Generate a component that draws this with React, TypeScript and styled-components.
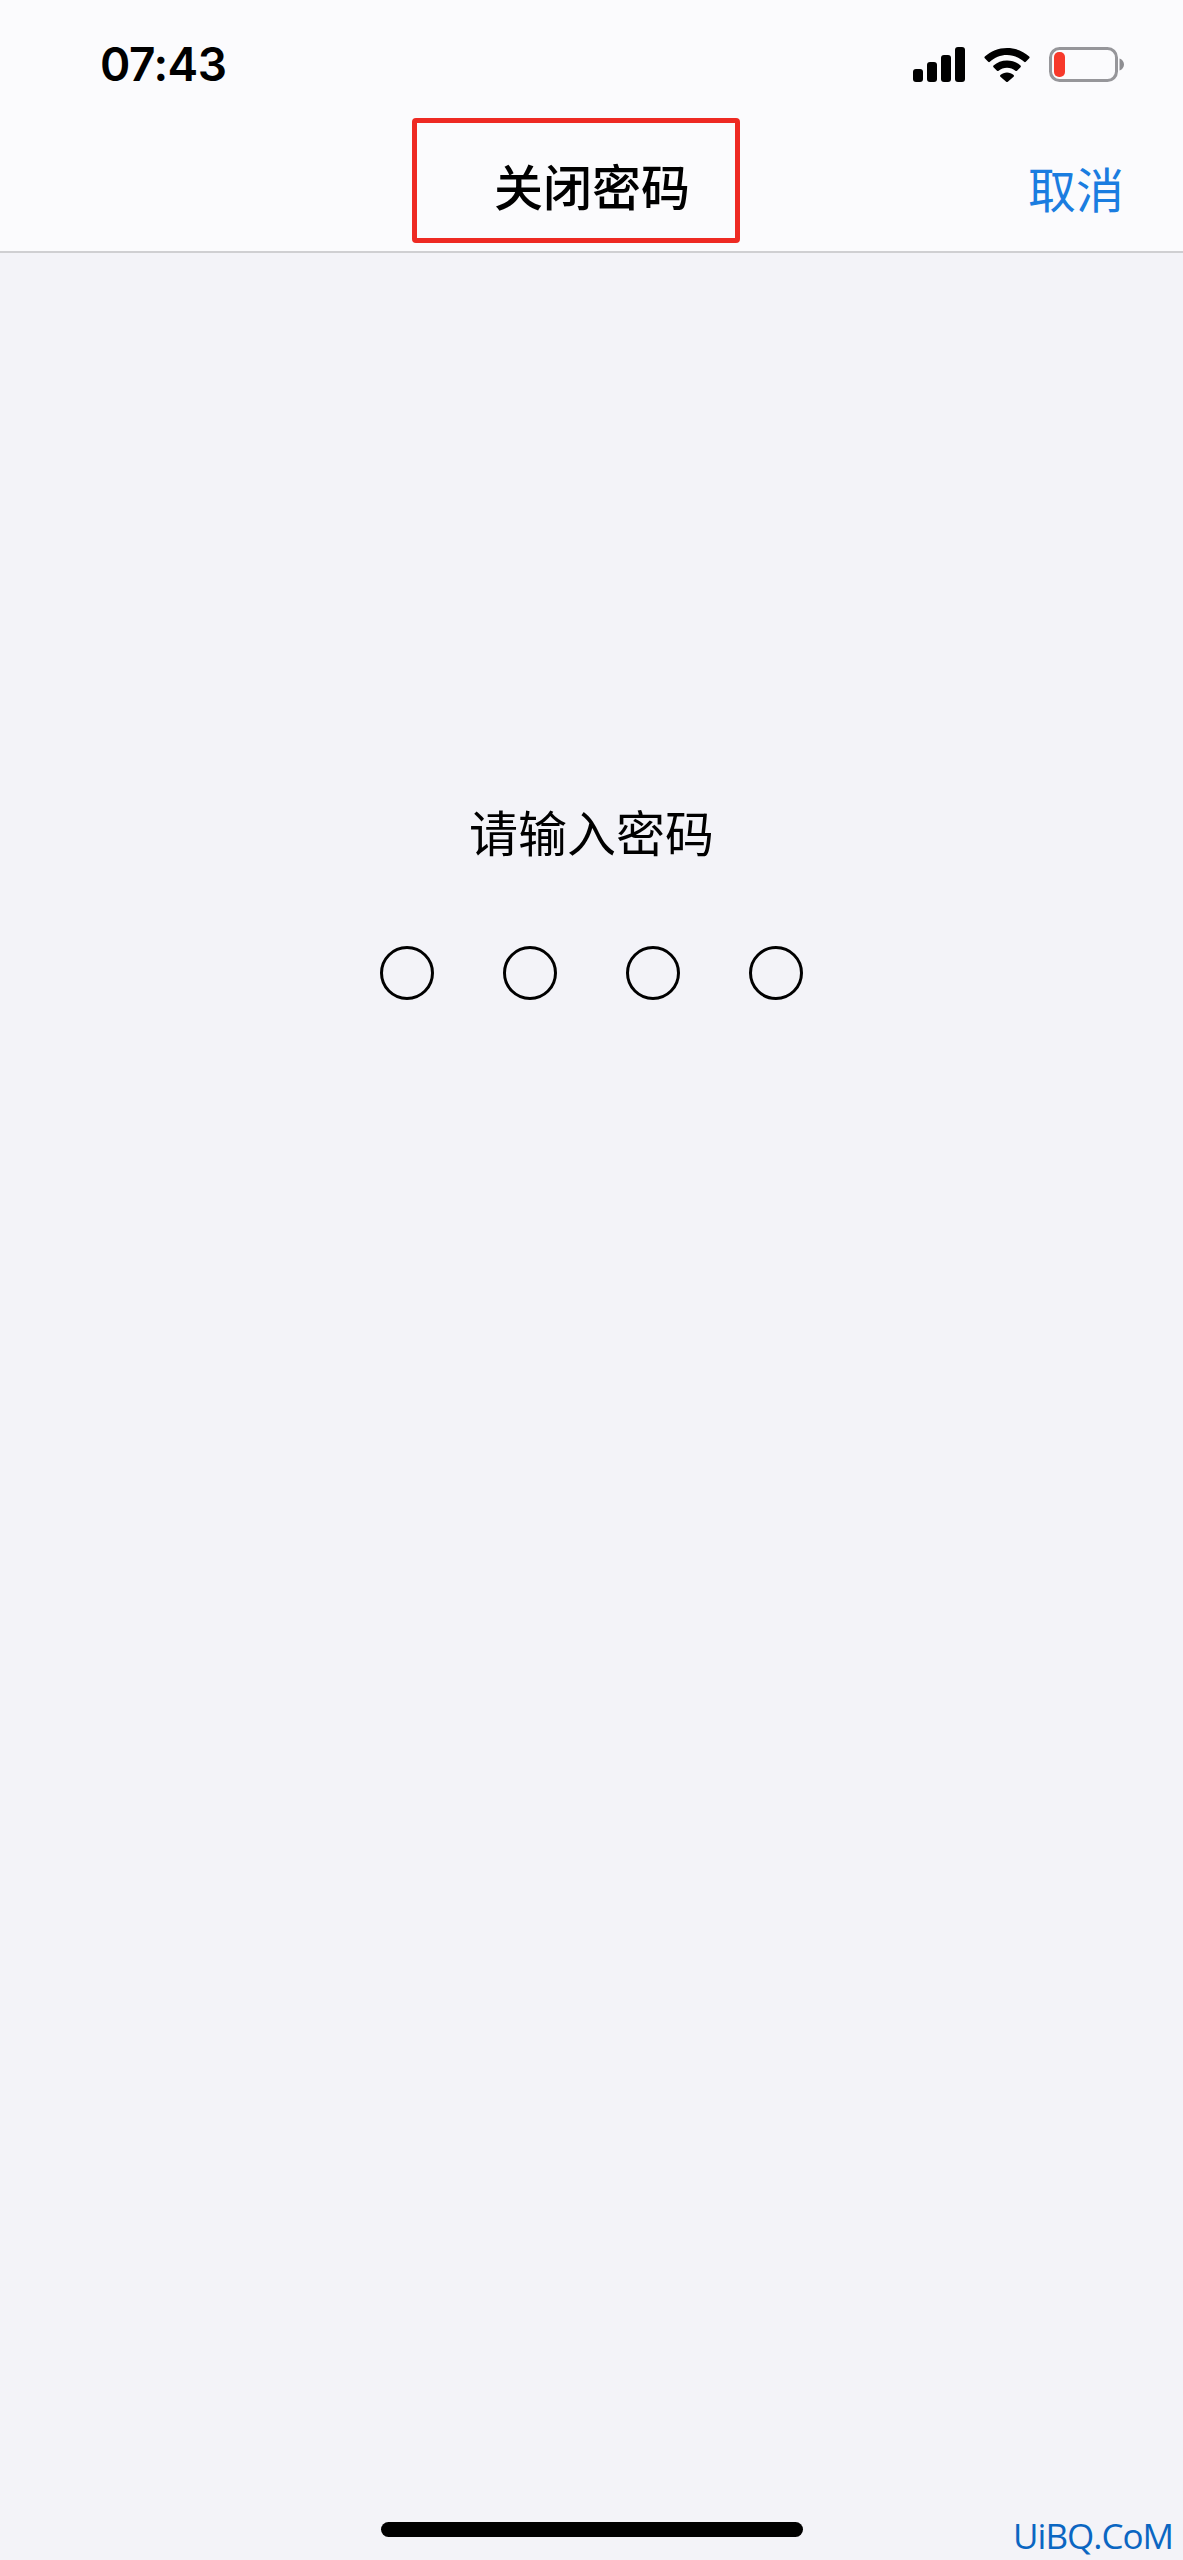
import styled, { createGlobalStyle } from "styled-components";

const CJK = `"Noto Sans CJK SC", "Noto Sans", sans-serif`;

const GlobalStyle = createGlobalStyle`
  html, body {
    margin: 0;
    padding: 0;
    background: #f3f3f8;
  }
`;

export default function App() {
  return (
    <Page>
      <GlobalStyle />
      <Header>
        <StatusBar>
          <Time>07:43</Time>
          <StatusIcons>
            <SignalIcon />
            <WifiIcon />
            <BatteryIcon />
          </StatusIcons>
        </StatusBar>
        <NavBar>
          <Highlight>
            <Title>关闭密码</Title>
          </Highlight>
          <Cancel>取消</Cancel>
        </NavBar>
      </Header>
      <Main>
        <Prompt>请输入密码</Prompt>
        <Dots>
          {[0, 1, 2, 3].map((i) => (
            <Dot key={i} />
          ))}
        </Dots>
      </Main>
      <HomeBar />
      <Watermark>UiBQ.CoM</Watermark>
    </Page>
  );
}

function SignalIcon() {
  return (
    <svg width="52" height="35" viewBox="0 0 52 35">
      <rect x="0" y="22" width="10" height="13" rx="3" fill="#000" />
      <rect x="14" y="15" width="10" height="20" rx="3" fill="#000" />
      <rect x="28" y="8" width="10" height="27" rx="3" fill="#000" />
      <rect x="42" y="0" width="10" height="35" rx="3" fill="#000" />
    </svg>
  );
}

function WifiIcon() {
  return (
    <svg width="46" height="34" viewBox="0 0 46 34">
      <path
        d="M23 0C14.5 0 6.7 3.2 0.8 8.6c-.5.5-.5 1.200 0 1.700l3.400 3.500c.5.500 1.200.500 1.700 0C10.500 9.600 16.500 7.100 23 7.100s12.500 2.500 17.100 6.700c.5.500 1.200.500 1.700 0l3.400-3.500c.5-.5.500-1.200 0-1.700C39.300 3.200 31.500 0 23 0z"
        fill="#000"
      />
      <path
        d="M23 12.400c-5.200 0-9.900 1.900-13.500 5.100-.5.500-.5 1.200 0 1.700l3.500 3.500c.5.500 1.100.500 1.600.100 2.300-1.900 5.200-3 8.400-3s6.100 1.100 8.400 3c.5.400 1.100.400 1.600-.100l3.500-3.500c.5-.5.500-1.200 0-1.700-3.600-3.200-8.300-5.100-13.500-5.100z"
        fill="#000"
      />
      <path
        d="M23 24.600c-2.500 0-4.800.9-6.600 2.400-.5.500-.5 1.200 0 1.700l5.800 5c.5.400 1.100.400 1.600 0l5.800-5c.5-.5.500-1.200 0-1.700-1.800-1.500-4.100-2.400-6.600-2.400z"
        fill="#000"
      />
    </svg>
  );
}

function BatteryIcon() {
  return (
    <svg width="75" height="35" viewBox="0 0 75 35">
      <rect x="1.500" y="1.500" width="66" height="32" rx="9" fill="none" stroke="#96969a" strokeWidth="3" />
      <rect x="5" y="5" width="11" height="25" rx="5" fill="#f7392b" />
      <path d="M70.500 11.500c2.500.8 4.500 3 4.500 6s-2 5.200-4.500 6z" fill="#8e8e92" />
    </svg>
  );
}

const Page = styled.div`
  position: relative;
  display: flex;
  flex-direction: column;
  width: 1183px;
  height: 2560px;
  overflow: hidden;
  background: #f3f3f8;
`;

const Header = styled.header`
  height: 251px;
  background: #fbfbfd;
  border-bottom: 2px solid #cfcfd2;
`;

const StatusBar = styled.div`
  display: flex;
  align-items: flex-start;
  justify-content: space-between;
  height: 118px;
  padding: 39px 59px 0 100px;
  box-sizing: border-box;
`;

const Time = styled.span`
  font-family: Inter, "Liberation Sans", sans-serif;
  font-size: 46px;
  font-weight: 600;
  line-height: 50px;
  letter-spacing: -0.5px;
  color: #000;
`;

const StatusIcons = styled.div`
  display: flex;
  align-items: center;
  gap: 19px;
  margin-top: 8px;

  svg {
    display: block;
  }
`;

const NavBar = styled.nav`
  display: flex;
  align-items: flex-start;
  justify-content: space-between;
  padding: 0 59px 0 412px;
`;

const Highlight = styled.div`
  display: flex;
  align-items: center;
  width: 328px;
  height: 125px;
  padding: 8px 0 0 77px;
  box-sizing: border-box;
  border: 5px solid #ee2a23;
  border-radius: 4px;
`;

const Title = styled.h1`
  margin: 0;
  font-family: ${CJK};
  font-size: 49px;
  font-weight: 500;
  line-height: 60px;
  color: #000;
`;

const Cancel = styled.button`
  padding: 0;
  margin-top: 39px;
  border: 0;
  background: none;
  font-family: ${CJK};
  font-size: 48px;
  font-weight: 400;
  line-height: 60px;
  color: #1a7de0;
`;

const Main = styled.main`
  display: flex;
  flex: 1;
  flex-direction: column;
  align-items: center;
  padding-top: 548px;
`;

const Prompt = styled.p`
  margin: 0;
  font-family: ${CJK};
  font-size: 49px;
  font-weight: 400;
  line-height: 60px;
  color: #000;
`;

const Dots = styled.div`
  display: flex;
  gap: 69px;
  margin-top: 85px;
`;

const Dot = styled.span`
  width: 54px;
  height: 54px;
  box-sizing: border-box;
  border: 3px solid #000;
  border-radius: 50%;
`;

const HomeBar = styled.div`
  align-self: center;
  width: 422px;
  height: 15px;
  margin-bottom: 23px;
  border-radius: 8px;
  background: #000;
`;

const Watermark = styled.span`
  position: absolute;
  right: 10px;
  bottom: 4px;
  font-family: "Open Sans", sans-serif;
  font-size: 35px;
  line-height: 40px;
  letter-spacing: -1px;
  color: #0a66c2;
`;
